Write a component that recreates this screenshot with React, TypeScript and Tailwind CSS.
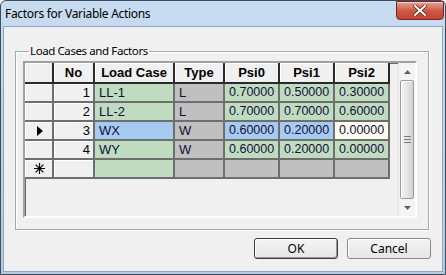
import { useState } from 'react';

type Row = {
	mark: string;
	no: string;
	loadCase: string;
	type: string;
	psi: string[];
	isNew?: boolean;
};

const rows: Row[] = [
	{ mark: '', no: '1', loadCase: 'LL-1', type: 'L', psi: ['0.70000', '0.50000', '0.30000'] },
	{ mark: '', no: '2', loadCase: 'LL-2', type: 'L', psi: ['0.70000', '0.70000', '0.60000'] },
	{ mark: 'current', no: '3', loadCase: 'WX', type: 'W', psi: ['0.60000', '0.20000', '0.00000'] },
	{ mark: '', no: '4', loadCase: 'WY', type: 'W', psi: ['0.60000', '0.20000', '0.00000'] },
	{ mark: 'new', no: '', loadCase: '', type: '', psi: ['', '', ''], isNew: true },
];

const cellBase = "h-[19px] border-r-2 border-b-2 border-[#6e6e6e] flex items-center text-[12.5px] text-[#10103a] leading-none overflow-hidden";
const headBase = "h-[21px] border-r-2 border-b-2 border-[#2a2a2a] bg-[#f0f0f0] shadow-[inset_1px_1px_0_#ffffff] flex items-center justify-center text-[13px] font-bold text-black leading-none";

const App = () => {
	const [current] = useState(2);

	return (
		<div className="w-[446px] h-[275px] flex flex-col border border-[#3e4c5c] rounded-t-[6px] bg-gradient-to-b from-[#c8dcf1] via-[#bcd3ec] to-[#b4cce6] font-['Liberation_Sans',sans-serif] select-none">
			{/* title bar */}
			<div className="h-[25px] flex items-start justify-between">
				<div className="pl-[4px] pt-[5px] text-[12px] leading-[16px] text-black font-['Noto_Sans',sans-serif] tracking-[-0.3px]">
					Factors for Variable Actions
				</div>
				<div className="mr-[1px] w-[48px] h-[19px] rounded-b-[4px] border border-[#6b2a24] bg-gradient-to-b from-[#e6a295] via-[#cf5a48] to-[#c4402f] shadow-[inset_0_1px_0_rgba(255,255,255,0.5)] flex items-center justify-center">
					<svg width="14" height="11" viewBox="0 0 14 11">
						<path d="M2 1 L12 10 M12 1 L2 10" stroke="#5a1e18" strokeWidth="3.6" strokeLinecap="square" />
						<path d="M2 1 L12 10 M12 1 L2 10" stroke="#ffffff" strokeWidth="2" strokeLinecap="square" />
					</svg>
				</div>
			</div>

			{/* client area */}
			<div className="flex-1 mx-[2px] mb-[2px] border border-[#8fa6c1] bg-[#f0f0f0] flex flex-col">
				<fieldset className="ml-[11px] mt-[16px] w-[414px] border border-[#a8a8a8] shadow-[1px_1px_0_#ffffff,inset_1px_1px_0_#ffffff] pl-[7px] pr-[10px] pb-[11px]">
					<legend className="ml-[6px] px-[1px] text-[11.5px] leading-[16px] text-black font-['Noto_Sans',sans-serif] tracking-[-0.4px]">
						Load Cases and Factors
					</legend>
					<div className="mt-[2px] w-[394px] h-[157px] border-2 border-t-[#a0a0a0] border-l-[#a0a0a0] border-b-[#ffffff] border-r-[#ffffff] shadow-[inset_1px_1px_0_#696969] bg-[#f0f0f0] flex">
						<div className="w-[365px] grid grid-cols-[29px_41px_80px_50px_55px_55px_55px] content-start">
							<div className={headBase}></div>
							<div className={headBase}>No</div>
							<div className={headBase}>Load Case</div>
							<div className={headBase}>Type</div>
							<div className={headBase}>Psi0</div>
							<div className={headBase}>Psi1</div>
							<div className={headBase}>Psi2</div>

							{rows.map((r, i) => {
								const sel = i === current;
								const green = sel ? 'bg-[#a6caf0]' : 'bg-[#c0dcc0]';
								const psiBg = (k: number) => {
									if (r.isNew) return 'bg-[#c0c0c0]';
									if (sel) return k === 2 ? 'bg-[#fffbf0]' : 'bg-[#a6caf0]';
									return 'bg-[#c0dcc0]';
								};
								return (
									<div key={i} className="contents">
										<div className={`${cellBase} border-[#2a2a2a] bg-[#f0f0f0] shadow-[inset_1px_1px_0_#ffffff] justify-center pl-[2px]`}>
											{r.mark === 'current' && (
												<svg width="6" height="10" viewBox="0 0 6 10">
													<path d="M0 0 L6 5 L0 10 Z" fill="#000" />
												</svg>
											)}
											{r.mark === 'new' && (
												<svg width="11" height="11" viewBox="0 0 11 11">
													<path d="M5.5 0 V11 M0 5.5 H11 M1.6 1.6 L9.4 9.4 M9.4 1.6 L1.6 9.4" stroke="#000" strokeWidth="1.2" />
												</svg>
											)}
										</div>
										<div className={`${cellBase} border-[#2a2a2a] bg-[#f0f0f0] shadow-[inset_1px_1px_0_#ffffff] justify-end pr-[3px] text-[13px] text-black`}>
											{r.no}
										</div>
										<div className={`${cellBase} ${green} pl-[4px] text-[13px]`}>{r.loadCase}</div>
										<div className={`${cellBase} bg-[#c0c0c0] pl-[4px] text-[13px]`}>{r.type}</div>
										{r.psi.map((p, k) => (
											<div key={k} className={`${cellBase} ${psiBg(k)} pl-[4px]`}>{p}</div>
										))}
									</div>
								);
							})}
						</div>

						<div className="flex-1"></div>

						{/* scrollbar */}
						<div className="w-[17px] bg-[#f4f4f4] border-l border-[#e6e6e6] flex flex-col items-center">
							<div className="h-[17px] w-full flex items-center justify-center">
								<svg width="7" height="4" viewBox="0 0 7 4">
									<path d="M0 4 L3.5 0 L7 4 Z" fill="#606060" />
								</svg>
							</div>
							<div className="flex-1 w-[14px] rounded-[2px] border border-[#9c9c9c] bg-gradient-to-r from-[#f2f2f2] via-[#e6e6e6] to-[#d2d2d2] shadow-[inset_1px_1px_0_#ffffff] flex items-center justify-center">
								<svg width="7" height="7" viewBox="0 0 7 7">
									<path d="M0 0.5 H7 M0 3.5 H7 M0 6.5 H7" stroke="#7a7a7a" strokeWidth="1" />
								</svg>
							</div>
							<div className="h-[17px] w-full flex items-center justify-center">
								<svg width="7" height="4" viewBox="0 0 7 4">
									<path d="M0 0 L3.5 4 L7 0 Z" fill="#606060" />
								</svg>
							</div>
						</div>
					</div>
				</fieldset>

				<div className="mt-[8px] pr-[11px] flex justify-end gap-[9px]">
					<button className="w-[84px] h-[21px] rounded-[3px] border border-[#3c3c3c] bg-gradient-to-b from-[#f4f4f4] to-[#e6e6e6] shadow-[inset_1px_1px_0_#ffffff,inset_-1px_-1px_0_#9a9a9a] text-[12px] leading-none text-black font-['Noto_Sans',sans-serif]">
						OK
					</button>
					<button className="w-[84px] h-[21px] rounded-[3px] border border-[#8a8a8a] bg-gradient-to-b from-[#f4f4f4] to-[#e6e6e6] shadow-[inset_1px_1px_0_#ffffff] text-[12px] leading-none text-black font-['Noto_Sans',sans-serif]">
						Cancel
					</button>
				</div>
			</div>
		</div>
	);
};

export default App;
